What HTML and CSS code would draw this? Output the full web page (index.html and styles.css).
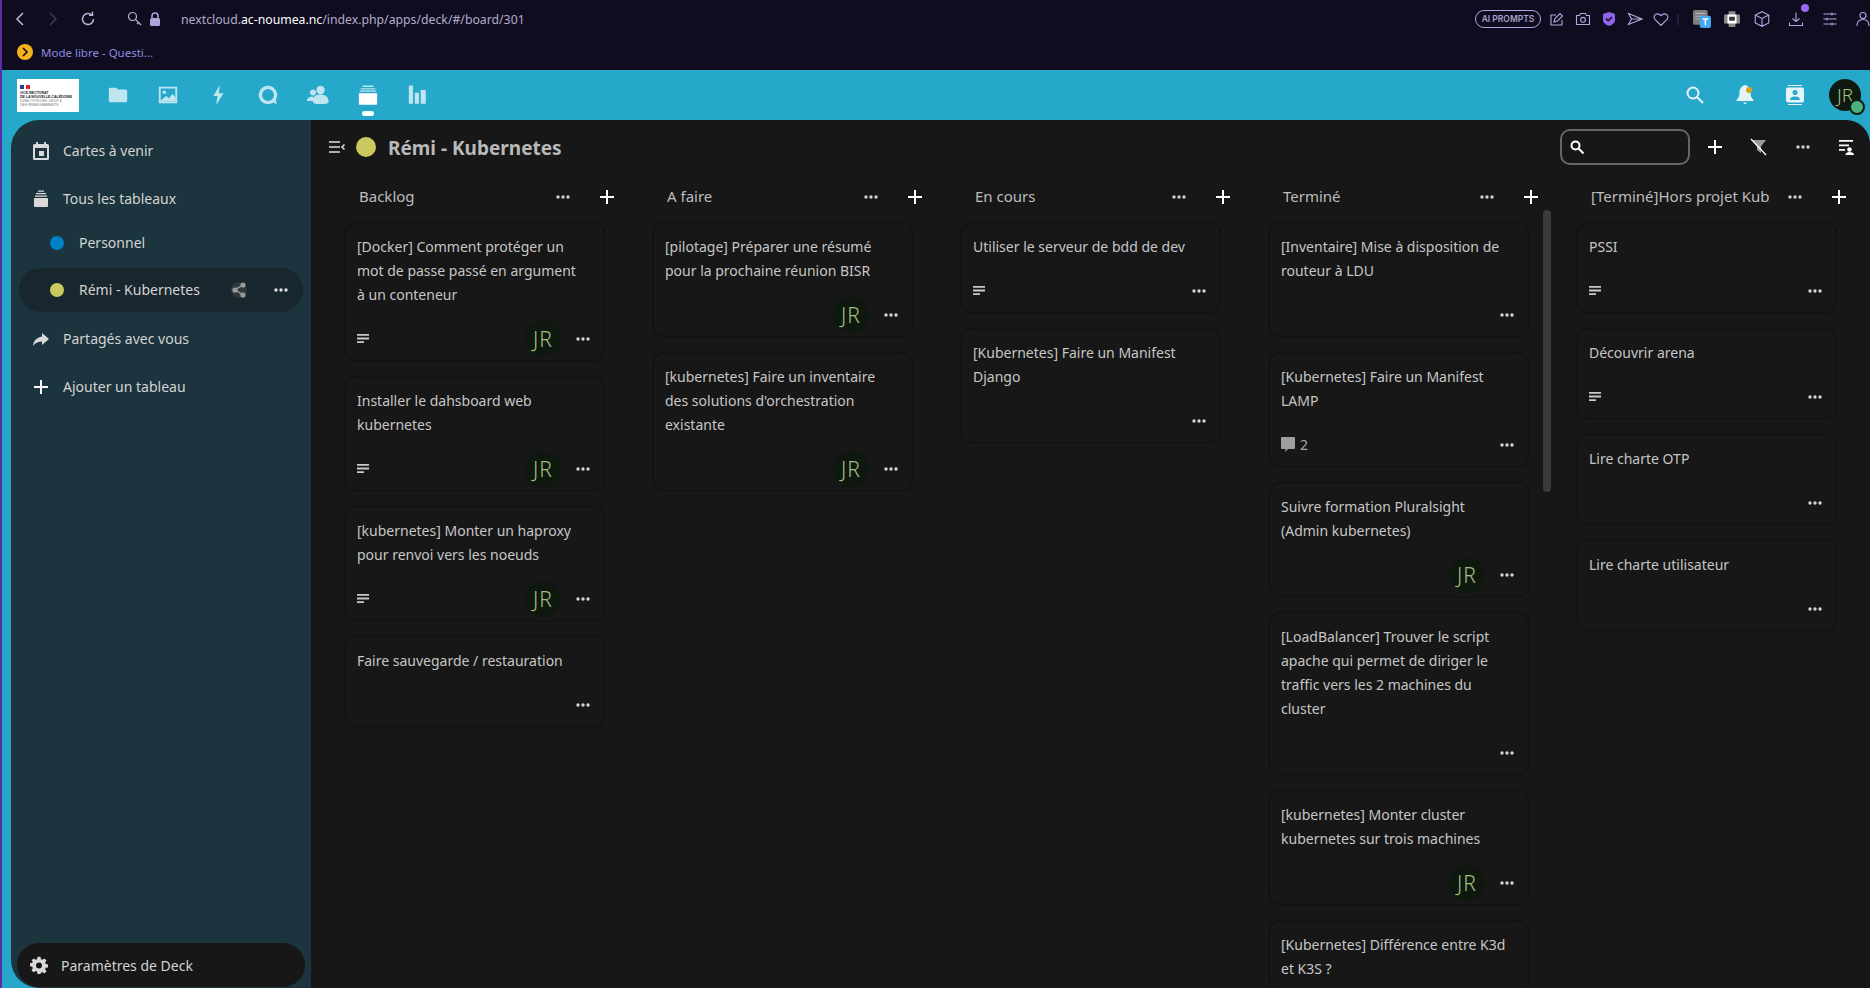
FILE: index.html
```html
<!DOCTYPE html>
<html lang="fr">
<head>
    <meta charset="UTF-8">
    <title>Rémi - Kubernetes - Deck</title>
    <link rel="stylesheet" href="styles.css">
</head>
<body>
    <svg class="sprite" width="0" height="0">
        <symbol id="i-dots" viewBox="0 0 16 16"><circle cx="3" cy="8" r="1.7"/><circle cx="8" cy="8" r="1.7"/><circle cx="13" cy="8" r="1.7"/></symbol>
        <symbol id="i-plus" viewBox="0 0 16 16"><path d="M7 1h2v6h6v2H9v6H7V9H1V7h6z"/></symbol>
        <symbol id="i-desc" viewBox="0 0 12 10"><path d="M0 0h12v1.8H0zM0 3.6h12v1.8H0zM0 7.2h7V9H0z"/></symbol>
        <symbol id="i-comment" viewBox="0 0 14 15"><path d="M1 0h12a1 1 0 0 1 1 1v10a1 1 0 0 1-1 1H7l-2.500 3v-3H1a1 1 0 0 1-1-1V1a1 1 0 0 1 1-1z"/></symbol>
    </svg>

    <div class="browser">
        <div class="browser-top">
            <svg class="br-nav" width="12" height="16" viewBox="0 0 12 16" fill="none" stroke="#b9b2d6" stroke-width="1.600"><path d="M9 2L3 8l6 6"/></svg>
            <svg class="br-nav" width="12" height="16" viewBox="0 0 12 16" fill="none" stroke="#3a3653" stroke-width="1.600"><path d="M3 2l6 6-6 6"/></svg>
            <svg class="br-nav" width="16" height="16" viewBox="0 0 16 16" fill="none" stroke="#b9b2d6" stroke-width="1.500"><path d="M13.500 8a5.500 5.500 0 1 1-1.800-4.100"/><path d="M12.500 0.800v3.500H9" /></svg>
            <svg class="br-key" width="16" height="16" viewBox="0 0 16 16" fill="none" stroke="#b9b2d6" stroke-width="1.200"><circle cx="5.500" cy="5.500" r="4"/><path d="M8.500 8.500L14 14M11.500 11.500l-1.500 1.500"/></svg>
            <svg class="br-lock" width="12" height="14" viewBox="0 0 12 14" fill="#b0a3dc"><rect x="1" y="6" width="10" height="8" rx="1.500"/><path d="M3 6V4a3 3 0 0 1 6 0v2" fill="none" stroke="#b0a3dc" stroke-width="1.500"/></svg>
            <div class="url">nextcloud.<b>ac-noumea.nc</b>/index.php/apps/deck/#/board/301</div>
            <div class="br-tools">
                <span class="ai-pill">AI PROMPTS</span>
                <svg class="br-tool" viewBox="0 0 16 16" fill="none" stroke="#b3a6e0" stroke-width="1.100"><path d="M13 9v5H2V4h5"/><path d="M5 11l1-3.500L11 2.500l2.500 2.500-5 5z"/></svg>
                <svg class="br-tool" viewBox="0 0 16 16" fill="none" stroke="#b3a6e0" stroke-width="1.100"><path d="M1.500 4.500h3l1-2h5l1 2h3v9h-13z"/><circle cx="8" cy="8.800" r="2.400"/></svg>
                <svg class="br-tool" viewBox="0 0 16 16"><path d="M8 1l6 2v6c0 3-3 5-6 6-3-1-6-3-6-6V3z" fill="#9163ec"/><path d="M5 7.500l2.200 2.200L11 6" fill="none" stroke="#0f0c1f" stroke-width="1.500"/></svg>
                <svg class="br-tool" viewBox="0 0 16 16" fill="none" stroke="#b3a6e0" stroke-width="1.100"><path d="M1.500 2.500L15 8 1.500 13.500 4.500 8zM4.500 8H15"/></svg>
                <svg class="br-tool" viewBox="0 0 16 16" fill="none" stroke="#b3a6e0" stroke-width="1.100"><path d="M8 14.500L2 8.500C-.5 5 3.500 .5 8 4.500c4.500-4 8.500 .5 6 4z"/></svg>
                <span class="br-sep"></span>
                <svg class="br-tool br-wide" viewBox="0 0 16 16"><rect x="0" y="0" width="13" height="13" rx="1.500" fill="#7d7d7d"/><path d="M2 3h9M2 5.500h7M2 8h5" stroke="#b5b5b5"/><rect x="6" y="5" width="10" height="11" rx="2" fill="#42a9f5"/><path d="M8.500 8h5M11 8v5.500" stroke="#fff" stroke-width="1.300"/></svg>
                <svg class="br-tool br-wide" viewBox="0 0 16 16"><path d="M5 1h6v3h4v8h-4v3H5v-3H1V4h4z" fill="#8c8c8c"/><rect x="4" y="4" width="8" height="8" fill="#fff"/><rect x="5.500" y="6" width="5" height="3.500" fill="#333"/></svg>
                <svg class="br-tool br-wide" viewBox="0 0 16 16" fill="none" stroke="#b3a6e0" stroke-width="1"><path d="M8 1.500l6 3v7l-6 3-6-3v-7zM2 4.500l6 3 6-3M8 7.500v7"/></svg>
                <span class="br-download">
                    <svg class="br-tool" viewBox="0 0 16 16" fill="none" stroke="#b3a6e0" stroke-width="1.100"><path d="M8 1.500v9M4.500 7.500L8 10.500l3.500-3M1.500 11.500v3h13v-3"/></svg>
                    <span class="br-badge"></span>
                </span>
                <svg class="br-tool" viewBox="0 0 16 16" fill="none" stroke="#b3a6e0" stroke-width="1.100"><path d="M1.500 3h13M1.500 8h13M1.500 13h13M10 1.500v3M5 6.500v3M10 11.500v3"/></svg>
                <svg class="br-tool br-user" viewBox="0 0 16 16" fill="none" stroke="#b3a6e0" stroke-width="1.100"><circle cx="8" cy="4.500" r="3"/><path d="M2 15c0-4 2-6.500 6-6.500s6 2.500 6 6.500"/></svg>
            </div>
        </div>
        <div class="bookmarks">
            <span class="bm-icon"><svg width="8" height="10" viewBox="0 0 8 10" fill="none" stroke="#0f0c1f" stroke-width="1.600"><path d="M2 1l4 4-4 4"/></svg></span>
            <span class="bm-text">Mode libre - Questi...</span>
        </div>
    </div>

    <div class="appbar">
        <div class="logo">
            <div class="logo-flag"><i class="blue"></i><i class="red"></i></div>
            <div class="logo-name">VICE-RECTORAT<br>DE LA NOUVELLE-CALÉDONIE</div>
            <div class="logo-sub">DIRECTION DES LIEUX &amp;<br>DES ENSEIGNEMENTS</div>
        </div>
        <nav class="apps">
            <a class="app"><svg width="22" height="22" viewBox="0 0 24 24"><path d="M10 4H4c-1.100 0-2 .9-2 2v12c0 1.100.9 2 2 2h16c1.100 0 2-.9 2-2V8c0-1.100-.9-2-2-2h-8z"/></svg></a>
            <a class="app"><svg width="22" height="22" viewBox="0 0 24 24"><path fill-rule="evenodd" d="M2 3h20v18H2zM4 5v14h16V5z"/><circle cx="8" cy="9" r="2"/><path d="M4 18l6-5 3 2.500 4-4.500 3 3.500V19H4z"/></svg></a>
            <a class="app"><svg width="22" height="22" viewBox="0 0 24 24"><path d="M14 1L7 13h4.500L10 23l8-13h-5z"/></svg></a>
            <a class="app"><svg width="22" height="22" viewBox="0 0 24 24"><path fill-rule="evenodd" d="M12 2a10 10 0 1 0 5.800 18.100L21.500 22l-1-4.800A10 10 0 0 0 12 2zm0 3.500a6.500 6.500 0 1 1 0 13 6.500 6.500 0 0 1 0-13z"/></svg></a>
            <a class="app"><svg width="24" height="24" viewBox="0 0 24 24"><circle cx="7" cy="9.500" r="3"/><path d="M1 18c0-3 2-4.500 6-4.500l1 4.500z"/><circle cx="14.500" cy="7" r="4.200"/><path d="M7 19c-1-4 2-7.500 7.500-7.500S23 15 22.500 19c0 1.500-2 2-8 2s-7-.5-7.500-2z"/></svg></a>
            <a class="app app-active"><svg width="22" height="24" viewBox="0 0 24 24"><rect x="2" y="10" width="20" height="12.500" rx="1"/><path opacity=".7" d="M3 7h18v1.500H3zM4 4.500h16V6H4zM6 1.500h12v1.700H6z"/></svg></a>
            <a class="app"><svg width="22" height="24" viewBox="0 0 24 24"><path d="M2 1.500h4.500v20H2zM8.500 9.500H13v12H8.500zM15 6.500h5.500v15H15z"/></svg></a>
        </nav>
        <div class="bar-right">
            <a class="bar-btn"><svg width="20" height="20" viewBox="0 0 20 20" fill="none" stroke="#e4f4f9" stroke-width="2"><circle cx="8" cy="8" r="5.500"/><path d="M12 12l6 6"/></svg></a>
            <a class="bar-btn"><svg width="20" height="22" viewBox="0 0 20 22" fill="#e4f4f9"><path d="M10 1c-4 1-5.500 4-5.500 8 0 3-1 5-3 7v1h17v-1c-2-2-3-4-3-7 0-4-1.500-7-5.500-8z"/><path d="M8 18.500h4l-2 2z"/></svg><span class="bell-dot"></span></a>
            <a class="bar-btn"><svg width="18" height="20" viewBox="0 0 18 20"><path d="M2 0h14v1H2zM2 19h14v1H2z" fill="#e4f4f9"/><rect y="2.500" width="18" height="15" rx="2" fill="#e4f4f9"/><circle cx="9" cy="7.500" r="2.500" fill="#26a8cb"/><path d="M4 15c0-2.500 2-3.500 5-3.500s5 1 5 3.500z" fill="#26a8cb"/></svg></a>
            <span class="me">JR<span class="me-status"></span></span>
        </div>
    </div>

    <div class="content">
        <aside class="sidebar">
            <a class="side-item">
                <svg width="16" height="18" viewBox="0 0 16 18" fill="#d9d9d9"><path fill-rule="evenodd" d="M3 0h2v2h6V0h2v2h1.500A1.500 1.500 0 0 1 16 3.500v13a1.500 1.500 0 0 1-1.500 1.500h-13A1.500 1.500 0 0 1 0 16.500v-13A1.500 1.500 0 0 1 1.500 2H3zM2 6v10h12V6z"/><rect x="6" y="9" width="5" height="5"/></svg>
                <span>Cartes à venir</span>
            </a>
            <a class="side-item">
                <svg width="16" height="18" viewBox="0 0 16 18" fill="#d9d9d9"><rect x="1" y="8" width="14" height="9" rx="1"/><path d="M2 5.500h12v1.300H2zM3 3h10v1.300H3zM5 .5h6v1.300H5z"/></svg>
                <span>Tous les tableaux</span>
            </a>
            <a class="side-item sub first-sub"><i class="dot dot-blue"></i><span>Personnel</span></a>
            <a class="side-item sub active">
                <i class="dot dot-yellow"></i><span>Rémi - Kubernetes</span>
                <span class="share"><svg width="14" height="16" viewBox="0 0 14 16" fill="#9a9a9a"><circle cx="11" cy="3" r="2.600"/><circle cx="3" cy="8" r="2.600"/><circle cx="11" cy="13" r="2.600"/><path d="M3 7l8-5 .6 1.200-8 5zM3.500 7.500l8 4.800-.7 1.200-8-5z"/></svg></span>
                <svg class="side-dots" width="16" height="16"><use href="#i-dots"/></svg>
            </a>
            <a class="side-item">
                <svg width="16" height="16" viewBox="0 0 16 16" fill="#d9d9d9"><path d="M9 2l7 6-7 6v-3.500C5 10.500 2 12 0 15c.5-5 3.500-8.500 9-9.500z"/></svg>
                <span>Partagés avec vous</span>
            </a>
            <a class="side-item">
                <svg class="plus" width="16" height="16"><use href="#i-plus"/></svg>
                <span>Ajouter un tableau</span>
            </a>
            <a class="settings">
                <svg width="18" height="18" viewBox="0 0 24 24" fill="#d9d9d9"><path fill-rule="evenodd" d="M10 1h4l.6 3.200 1.900.8L19.200 3.200 22 6l-1.800 2.700.8 1.900 3 .6v4l-3 .6-.8 1.900 1.800 2.700-2.800 2.800-2.700-1.800-1.900.8L14 24h-4l-.6-3.300-1.900-.8-2.700 1.800L2 18.900l1.800-2.700-.8-1.900-3-.6v-4l3-.6.8-1.900L2 6l2.800-2.800L7.500 5l1.900-.8zM12 8.500a4 4 0 1 0 0 8 4 4 0 0 0 0-8z"/></svg>
                <span>Paramètres de Deck</span>
            </a>
        </aside>

        <main class="main">
            <header class="board-head">
                <a class="toggle"><svg width="16" height="12" viewBox="0 0 16 12" fill="none" stroke="#e0e0e0" stroke-width="1.500"><path d="M0 1h11M0 6h11M0 11h11M15.500 3.500L13 6l2.500 2.500"/></svg></a>
                <i class="board-dot"></i>
                <h1 class="board-title">Rémi - Kubernetes</h1>
                <div class="board-tools">
                    <div class="search-box">
                        <svg width="14" height="14" viewBox="0 0 14 14" fill="none" stroke="#fff" stroke-width="2"><circle cx="5.500" cy="5.500" r="4"/><path d="M8.500 8.500L13.500 13.500"/></svg>
                    </div>
                    <a class="tool"><svg class="plus" width="16" height="16"><use href="#i-plus"/></svg></a>
                    <a class="tool"><svg width="18" height="18" viewBox="0 0 18 18"><path d="M2 2h14l-5 6.500V15l-4-3V8.500z" fill="#9a9a9a"/><path d="M1 1l15 16" stroke="#fff" stroke-width="1.300"/></svg></a>
                    <a class="tool"><svg class="dots-grey" width="16" height="16"><use href="#i-dots"/></svg></a>
                    <a class="tool"><svg width="16" height="16" viewBox="0 0 16 16" fill="#fff"><path d="M0 1h14v1.700H0zM0 5.500h10v1.700H0zM0 10h6v1.700H0z"/><circle cx="10.500" cy="10.500" r="2.300"/><path d="M6.500 16c0-2.200 1.800-3 4-3s4.500 .8 4.500 3z"/></svg></a>
                </div>
            </header>

            <div class="board">
                <section class="stack">
                    <div class="stack-head"><span class="stack-title">Backlog</span><a class="head-btn dots-grey"><svg width="16" height="16"><use href="#i-dots"/></svg></a><a class="head-btn"><svg class="plus" width="16" height="16"><use href="#i-plus"/></svg></a></div>
                    <div class="card">
                        <div class="card-title">[Docker] Comment protéger un mot de passe passé en argument à un conteneur</div>
                        <div class="card-foot"><svg class="desc" width="12" height="10"><use href="#i-desc"/></svg><span class="avatar">JR</span><a class="card-more"><svg width="16" height="16"><use href="#i-dots"/></svg></a></div>
                    </div>
                    <div class="card">
                        <div class="card-title">Installer le dahsboard web kubernetes</div>
                        <div class="card-foot"><svg class="desc" width="12" height="10"><use href="#i-desc"/></svg><span class="avatar">JR</span><a class="card-more"><svg width="16" height="16"><use href="#i-dots"/></svg></a></div>
                    </div>
                    <div class="card">
                        <div class="card-title">[kubernetes] Monter un haproxy pour renvoi vers les noeuds</div>
                        <div class="card-foot"><svg class="desc" width="12" height="10"><use href="#i-desc"/></svg><span class="avatar">JR</span><a class="card-more"><svg width="16" height="16"><use href="#i-dots"/></svg></a></div>
                    </div>
                    <div class="card">
                        <div class="card-title">Faire sauvegarde / restauration</div>
                        <div class="card-foot"><a class="card-more"><svg width="16" height="16"><use href="#i-dots"/></svg></a></div>
                    </div>
                </section>

                <section class="stack">
                    <div class="stack-head"><span class="stack-title">A faire</span><a class="head-btn dots-grey"><svg width="16" height="16"><use href="#i-dots"/></svg></a><a class="head-btn"><svg class="plus" width="16" height="16"><use href="#i-plus"/></svg></a></div>
                    <div class="card">
                        <div class="card-title">[pilotage] Préparer une résumé pour la prochaine réunion BISR</div>
                        <div class="card-foot"><span class="avatar">JR</span><a class="card-more"><svg width="16" height="16"><use href="#i-dots"/></svg></a></div>
                    </div>
                    <div class="card">
                        <div class="card-title">[kubernetes] Faire un inventaire des solutions d'orchestration existante</div>
                        <div class="card-foot"><span class="avatar">JR</span><a class="card-more"><svg width="16" height="16"><use href="#i-dots"/></svg></a></div>
                    </div>
                </section>

                <section class="stack">
                    <div class="stack-head"><span class="stack-title">En cours</span><a class="head-btn dots-grey"><svg width="16" height="16"><use href="#i-dots"/></svg></a><a class="head-btn"><svg class="plus" width="16" height="16"><use href="#i-plus"/></svg></a></div>
                    <div class="card">
                        <div class="card-title">Utiliser le serveur de bdd de dev</div>
                        <div class="card-foot"><svg class="desc" width="12" height="10"><use href="#i-desc"/></svg><a class="card-more"><svg width="16" height="16"><use href="#i-dots"/></svg></a></div>
                    </div>
                    <div class="card">
                        <div class="card-title">[Kubernetes] Faire un Manifest Django</div>
                        <div class="card-foot"><a class="card-more"><svg width="16" height="16"><use href="#i-dots"/></svg></a></div>
                    </div>
                </section>

                <section class="stack">
                    <div class="stack-head"><span class="stack-title">Terminé</span><a class="head-btn dots-grey"><svg width="16" height="16"><use href="#i-dots"/></svg></a><a class="head-btn"><svg class="plus" width="16" height="16"><use href="#i-plus"/></svg></a></div>
                    <div class="card">
                        <div class="card-title">[Inventaire] Mise à disposition de routeur à LDU</div>
                        <div class="card-foot"><a class="card-more"><svg width="16" height="16"><use href="#i-dots"/></svg></a></div>
                    </div>
                    <div class="card">
                        <div class="card-title">[Kubernetes] Faire un Manifest LAMP</div>
                        <div class="card-foot"><svg class="comment" width="14" height="15"><use href="#i-comment"/></svg><span class="comment-count">2</span><a class="card-more"><svg width="16" height="16"><use href="#i-dots"/></svg></a></div>
                    </div>
                    <div class="card">
                        <div class="card-title">Suivre formation Pluralsight (Admin kubernetes)</div>
                        <div class="card-foot"><span class="avatar">JR</span><a class="card-more"><svg width="16" height="16"><use href="#i-dots"/></svg></a></div>
                    </div>
                    <div class="card">
                        <div class="card-title">[LoadBalancer] Trouver le script apache qui permet de diriger le traffic vers les 2 machines du cluster</div>
                        <div class="card-foot"><a class="card-more"><svg width="16" height="16"><use href="#i-dots"/></svg></a></div>
                    </div>
                    <div class="card">
                        <div class="card-title">[kubernetes] Monter cluster kubernetes sur trois machines</div>
                        <div class="card-foot"><span class="avatar">JR</span><a class="card-more"><svg width="16" height="16"><use href="#i-dots"/></svg></a></div>
                    </div>
                    <div class="card">
                        <div class="card-title">[Kubernetes] Différence entre K3d et K3S ?</div>
                    </div>
                    <div class="scrollbar"></div>
                </section>

                <section class="stack">
                    <div class="stack-head"><span class="stack-title">[Terminé]Hors projet Kub</span><a class="head-btn dots-grey"><svg width="16" height="16"><use href="#i-dots"/></svg></a><a class="head-btn"><svg class="plus" width="16" height="16"><use href="#i-plus"/></svg></a></div>
                    <div class="card">
                        <div class="card-title">PSSI</div>
                        <div class="card-foot"><svg class="desc" width="12" height="10"><use href="#i-desc"/></svg><a class="card-more"><svg width="16" height="16"><use href="#i-dots"/></svg></a></div>
                    </div>
                    <div class="card">
                        <div class="card-title">Découvrir arena</div>
                        <div class="card-foot"><svg class="desc" width="12" height="10"><use href="#i-desc"/></svg><a class="card-more"><svg width="16" height="16"><use href="#i-dots"/></svg></a></div>
                    </div>
                    <div class="card">
                        <div class="card-title">Lire charte OTP</div>
                        <div class="card-foot"><a class="card-more"><svg width="16" height="16"><use href="#i-dots"/></svg></a></div>
                    </div>
                    <div class="card">
                        <div class="card-title">Lire charte utilisateur</div>
                        <div class="card-foot"><a class="card-more"><svg width="16" height="16"><use href="#i-dots"/></svg></a></div>
                    </div>
                </section>
            </div>
        </main>
    </div>
</body>
</html>
```
FILE: styles.css
```css
body {
    display: flex;
    flex-direction: column;
    margin: 0;
    height: 100vh;
    overflow: hidden;
    background-color: #26a8cb;
    font-family: "Noto Sans", "Open Sans", Arial, sans-serif;
    font-size: 14px;
    color: #d0d0d0;
    border-left: 2px solid #5a2ca8;
    box-sizing: border-box;
}

.sprite {
    position: absolute;
}

/* barre du navigateur */
.browser {
    height: 70px;
    flex: none;
    background-color: #0f0c1f;
    margin-left: -2px;
    padding-left: 2px;
}

.browser-top {
    display: flex;
    align-items: center;
    height: 38px;
}

.br-nav {
    margin-left: 13px;
    margin-right: 8px;
}

.br-nav:first-child {
    margin-left: 12px;
}

.br-key {
    margin-left: 23px;
}

.br-lock {
    margin-left: 6px;
}

.url {
    margin-left: 20px;
    font-family: "Noto Sans", Arial, sans-serif;
    font-size: 12.250px;
    color: #b3adcb;
}

.url b {
    font-weight: 400;
    color: #ffffff;
}

.br-tools {
    display: flex;
    align-items: center;
    margin-left: auto;
    margin-right: -6px;
}

.ai-pill {
    display: flex;
    align-items: center;
    justify-content: center;
    width: 66px;
    height: 18px;
    border: 1px solid #b3a6e0;
    border-radius: 9px;
    box-sizing: border-box;
    font-family: Inter, Arial, sans-serif;
    font-size: 8.500px;
    font-weight: 600;
    color: #a9a0c9;
    margin-right: 3px;
}

.br-tool {
    display: block;
    width: 16px;
    height: 16px;
    margin: 0 5px;
}

.br-wide {
    width: 18px;
    height: 18px;
    margin: 0 6px;
}

.br-user {
    margin-left: 12px;
}

.br-sep {
    width: 2px;
    height: 11px;
    margin: 0 8px 0 3px;
    background-color: #221f3a;
}

.br-download {
    position: relative;
    margin-left: 6px;
    margin-right: 8px;
}

.br-badge {
    position: absolute;
    top: -7px;
    right: 0;
    width: 8px;
    height: 8px;
    border-radius: 50%;
    background-color: #a066f5;
}

.bookmarks {
    display: flex;
    align-items: center;
    gap: 8px;
    height: 28px;
    padding-left: 15px;
}

.bm-icon {
    display: flex;
    align-items: center;
    justify-content: center;
    width: 16px;
    height: 16px;
    border-radius: 50%;
    background-color: #f5b31b;
}

.bm-text {
    font-size: 11.500px;
    color: #8b8be0;
}

/* barre nextcloud */
.appbar {
    display: flex;
    align-items: center;
    height: 50px;
    flex: none;
}

.logo {
    width: 62px;
    height: 33px;
    margin-left: 15px;
    padding: 3px 0 0 3px;
    box-sizing: border-box;
    background-color: #ffffff;
    overflow: hidden;
    color: #222;
    font-size: 3.500px;
    line-height: 4px;
    white-space: nowrap;
    font-family: "Liberation Sans", Arial, sans-serif;
}

.logo-flag {
    display: flex;
    gap: 2px;
    height: 7px;
    margin-bottom: 2px;
    align-items: flex-end;
}

.logo-flag i {
    display: block;
    width: 4px;
    height: 4px;
}

.logo-flag .blue {
    background-color: #2b3f8f;
}

.logo-flag .red {
    background-color: #e0202c;
}

.logo-name {
    font-weight: 700;
}

.logo-sub {
    color: #777;
}

.apps {
    display: flex;
    margin-left: 14px;
}

.app {
    position: relative;
    display: flex;
    align-items: center;
    justify-content: center;
    width: 50px;
    height: 50px;
    fill: #bfe5f0;
}

.app-active {
    fill: #ffffff;
}

.app-active::after {
    content: "";
    position: absolute;
    left: 19px;
    bottom: 4px;
    width: 12px;
    height: 5px;
    border-radius: 3px;
    background-color: #ffffff;
}

.bar-right {
    display: flex;
    align-items: center;
    margin-left: auto;
    padding-right: 9px;
}

.bar-btn {
    position: relative;
    display: flex;
    align-items: center;
    justify-content: center;
    width: 50px;
    height: 50px;
}

.bell-dot {
    position: absolute;
    top: 17px;
    right: 18px;
    width: 6px;
    height: 6px;
    border-radius: 50%;
    background-color: #d9a11a;
}

.me {
    position: relative;
    display: flex;
    align-items: center;
    justify-content: center;
    width: 32px;
    height: 32px;
    margin-left: 9px;
    border-radius: 50%;
    background-color: #0f180f;
    color: #a0bf80;
    font-size: 19px;
    font-weight: 300;
}

.me-status {
    position: absolute;
    right: -4px;
    bottom: -4px;
    width: 12px;
    height: 12px;
    border: 2px solid #141a14;
    border-radius: 50%;
    background-color: #49b382;
}

/* contenu */
.content {
    display: flex;
    flex: 1;
    min-height: 0;
    margin-left: 9px;
}

/* menu latéral */
.sidebar {
    display: flex;
    flex-direction: column;
    gap: 4px;
    width: 300px;
    flex: none;
    padding: 9px 8px 1px;
    box-sizing: border-box;
    background-color: #1c343d;
    border-radius: 28px 0 0 28px;
}

.side-item {
    display: flex;
    align-items: center;
    height: 44px;
    flex: none;
    color: #d3d3d3;
}

.side-item > span:not(.share) {
    padding-bottom: 2px;
}

.side-item > svg:first-child {
    width: 44px;
    flex: none;
}

.plus {
    fill: #ffffff;
}

.side-item.sub {
    padding-left: 16px;
}

.first-sub {
    margin-top: -4px;
    margin-bottom: -1px;
}

.active {
    background-color: #18262d;
    border-radius: 22px;
    margin-bottom: 1px;
}

.dot {
    display: block;
    width: 14px;
    height: 14px;
    margin: 0 15px;
    border-radius: 50%;
}

.dot-blue {
    background-color: #0082c9;
}

.dot-yellow {
    background-color: #c9c95d;
}

.share {
    display: flex;
    align-items: center;
    justify-content: center;
    width: 16px;
    height: 16px;
    margin-left: auto;
    border-radius: 8px;
    background-color: #2f3a3f;
}

.side-dots {
    fill: #e0e0e0;
    margin: 0 14px 0 26px;
}

.settings {
    display: flex;
    align-items: center;
    height: 44px;
    flex: none;
    margin: auto -2px 0;
    background-color: #171717;
    border-radius: 22px;
    color: #d3d3d3;
}

.settings svg {
    margin: 0 13px 0 13px;
}

/* tableau */
.main {
    flex: 1;
    min-width: 0;
    display: flex;
    flex-direction: column;
    background-color: #171717;
    border-top-right-radius: 24px;
    overflow: hidden;
}

.board-head {
    display: flex;
    align-items: center;
    height: 36px;
    flex: none;
    margin-top: 9px;
    padding: 0 1px 0 9px;
}

.toggle {
    display: flex;
    align-items: center;
    justify-content: center;
    width: 34px;
    height: 36px;
}

.board-dot {
    display: block;
    width: 20px;
    height: 20px;
    margin-left: 2px;
    border-radius: 50%;
    background-color: #c9c95d;
}

.board-title {
    margin: 2px 0 0 12px;
    font-size: 19px;
    font-weight: 700;
    color: #b9b9b9;
}

.board-tools {
    display: flex;
    align-items: center;
    margin-left: auto;
}

.search-box {
    display: flex;
    align-items: center;
    width: 130px;
    height: 36px;
    margin-right: 3px;
    padding-left: 8px;
    border: 2px solid #666666;
    border-radius: 10px;
    box-sizing: border-box;
}

.tool {
    display: flex;
    align-items: center;
    justify-content: center;
    width: 44px;
    height: 44px;
}

.dots-grey {
    fill: #d0d0d0;
}

.board {
    display: flex;
    gap: 48px;
    flex: 1;
    min-height: 0;
    padding: 6px 0 0 34px;
    margin-top: 4px;
}

.stack {
    position: relative;
    width: 260px;
    flex: none;
}

.stack-head {
    display: flex;
    align-items: center;
    height: 44px;
    margin: 0 -24px 3px 0;
    padding-left: 14px;
}

.stack-title {
    flex: 1;
    min-width: 0;
    padding-bottom: 2px;
    white-space: nowrap;
    font-size: 15px;
    color: #bdbdbd;
}

.head-btn {
    display: flex;
    align-items: center;
    justify-content: center;
    width: 44px;
    height: 44px;
    flex: none;
}

.card {
    margin-bottom: 15px;
    padding-top: 12px;
    background-color: #171717;
    border: 1px solid #111111;
    border-radius: 12px;
    box-shadow: 0 0 0 1px #151515;
}

.card-title {
    margin: 0 20px 10px 11px;
    font-size: 14px;
    line-height: 24px;
    color: #c6c6c6;
}

.card-foot {
    display: flex;
    align-items: center;
    height: 43px;
    padding-left: 11px;
    fill: #c9c9c9;
}

.comment {
    fill: #9e9e9e;
    flex: none;
}

.comment-count {
    margin-left: 5px;
    color: #a6a6a6;
}

.avatar {
    display: flex;
    align-items: center;
    justify-content: center;
    width: 36px;
    height: 36px;
    margin-left: auto;
    border-radius: 50%;
    background-color: #0f180f;
    color: #a0bf80;
    font-size: 21px;
    font-weight: 300;
    letter-spacing: 1px;
}

.card-more {
    display: flex;
    align-items: center;
    justify-content: center;
    width: 44px;
    height: 43px;
    margin-right: -1px;
    fill: #d6d6d6;
}

.card-foot > .card-more:first-child,
.card-foot > .desc + .card-more,
.card-foot > .comment-count + .card-more {
    margin-left: auto;
}

.scrollbar {
    position: absolute;
    left: 274px;
    top: 35px;
    width: 8px;
    height: 282px;
    border-radius: 4px;
    background-color: #3b3b3b;
}
```
